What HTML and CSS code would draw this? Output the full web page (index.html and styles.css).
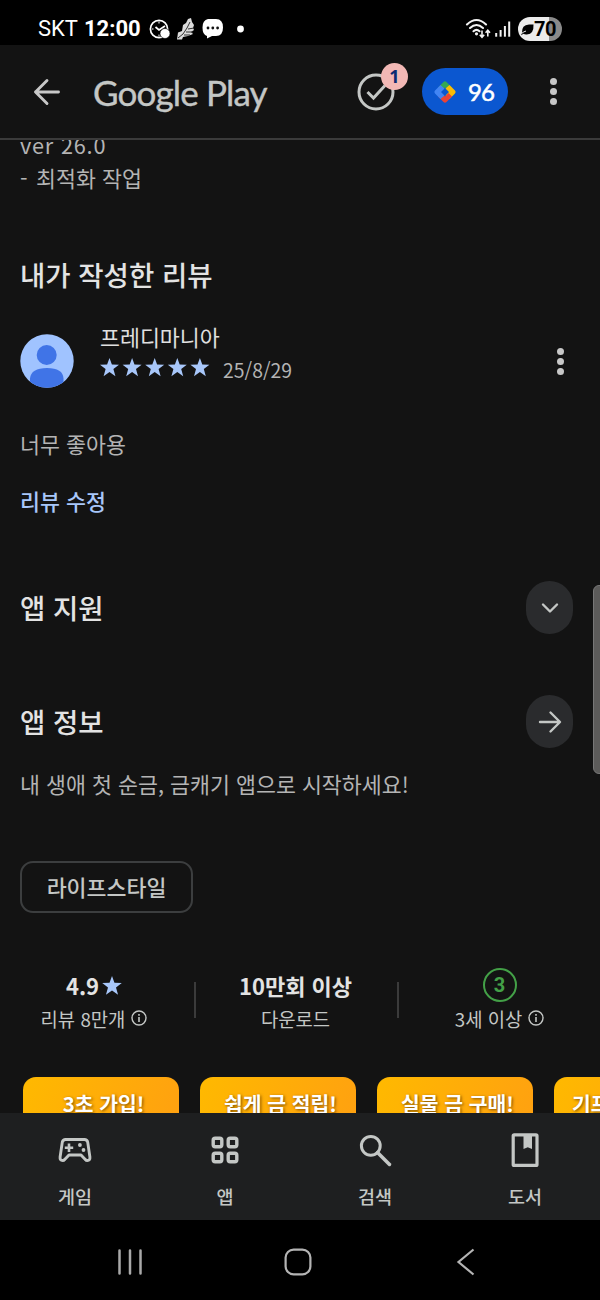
FILE: index.html
```html
<!DOCTYPE html>
<html lang="ko">
<head>
<meta charset="utf-8">
<title>Google Play</title>
<link rel="stylesheet" href="styles.css">
</head>
<body>
<div class="phone">
  <div class="status">
    <div class="status-left">
      <span class="carrier">SKT</span>
      <span class="clock">12:00</span>
      <svg class="status-icons" width="100" height="24" viewBox="0 0 100 24">
        <g fill="none" stroke="#fff" stroke-width="1.700">
          <circle cx="12" cy="12" r="8.600"/>
          <path d="M8.500 10l3.500 3 6-4"/>
          <path d="M12 4.500v2M5 12h1.500M12 17.500v2" stroke-width="1"/>
        </g>
        <circle cx="18" cy="16.500" r="5" fill="#fff" stroke="#000" stroke-width=".6"/>
        <path d="M30 22.500L31 15.500 35 14 36 8 39 6 41 2 44 1 45 5 47 8 46 11 47 13 44 15 46 17 41 19 36 20 35 22.500z" fill="#dcdcdc"/>
        <path d="M31 21L36 17 40 11 43 5M41 12l6-1M39 15l7 0M37 18l6 0" stroke="#333" stroke-width="1" fill="none"/>
        <path d="M61 2h8q7 0 7 8.500t-7 8.500h-4l-5 2.500v-2.500q-4.500-1-4.500-8.500t5.500-8.500z" fill="#fff"/>
        <g fill="#111"><circle cx="61" cy="11" r="1.400"/><circle cx="65.800" cy="11" r="1.400"/><circle cx="70.600" cy="11" r="1.400"/></g>
        <circle cx="93.500" cy="12" r="3.400" fill="#fff"/>
      </svg>
    </div>
    <div class="status-right">
      <svg width="48" height="24" viewBox="0 0 48 24">
        <g fill="none" stroke="#f2f2f2" stroke-width="2.100" stroke-linecap="round">
          <path d="M2 7.500q9.500-9 19 0M5 11q6.500-6 13 0M8.500 14.200q3-2.700 6 0"/>
        </g>
        <circle cx="11.500" cy="16.800" r="1.600" fill="#f2f2f2"/>
        <path d="M17 13.500v7M14.800 17.800l2.200 2.500 2.200-2.500M22.800 19.500v-6.500M20.600 15.700l2.200-2.500 2.200 2.500" fill="none" stroke="#f2f2f2" stroke-width="1.600"/>
        <g fill="#f2f2f2"><rect x="30.200" y="16" width="2" height="3.700"/><rect x="34.600" y="13" width="2" height="6.700"/><rect x="38.900" y="9" width="2" height="10.700"/><rect x="43.200" y="4.500" width="2" height="15.200"/></g>
      </svg>
      <div class="battery">
        <svg width="13" height="13" viewBox="0 0 13 13"><path d="M0 12.200L1 9.800Q.5 2 8 1.500h4.500Q13 11 6 11.500 3.500 11.700 2.500 10.800z" fill="#000"/><path d="M.5 10.500Q3 8.500 5 8" stroke="#ebebeb" stroke-width="1" fill="none"/></svg>
        <span>70</span>
      </div>
    </div>
  </div>

  <header class="topbar">
    <svg class="back" width="28" height="28" viewBox="0 0 28 28" fill="none" stroke="#c8c8c8" stroke-width="2.900" stroke-linecap="round" stroke-linejoin="round"><path d="M25.500 14H2.500M14 2.500L2.500 14 14 25.500"/></svg>
    <span class="brand">Google Play</span>
    <div class="tasks">
      <svg width="38" height="38" viewBox="0 0 38 38" fill="none" stroke="#c4c7c5" stroke-width="3"><circle cx="19" cy="19" r="17"/><path d="M10.500 19l6 6L28 12.500"/></svg>
      <span class="badge">1</span>
    </div>
    <div class="points">
      <svg width="24" height="24" viewBox="0 0 24 24">
        <path d="M5 7.500L10.500 2Q12 .6 13.500 2L19 7.500 15.500 11 12 7.500 8.500 11z" fill="#34a853"/>
        <path d="M16.500 5L22 10.500Q23.400 12 22 13.500L16.500 19 12.500 15.500 16 12 12.500 8.500z" fill="#fbbc04"/>
        <path d="M19 16.500L13.500 22Q12 23.400 10.500 22L5 16.500 8.500 13 12 16.500 15.500 13z" fill="#ea4335"/>
        <path d="M7.500 19L2 13.500Q.6 12 2 10.500L7.500 5 11.500 8.500 8 12 11.500 15.500z" fill="#4285f4"/>
      </svg>
      <span>96</span>
    </div>
    <div class="dots"><i></i><i></i><i></i></div>
  </header>

  <main class="content">
    <p class="notes"><span class="version">ver 26.0</span><br><span class="dash">-</span> 최적화 작업</p>
    <h2 class="heading my-review">내가 작성한 리뷰</h2>
    <div class="reviewer">
      <svg class="avatar" width="54" height="54" viewBox="0 0 54 54"><defs><clipPath id="disc"><circle cx="27" cy="27" r="26.700"/></clipPath></defs><g clip-path="url(#disc)"><rect width="54" height="54" fill="#a0c3ff"/><g fill="#4074e7"><circle cx="26.700" cy="21" r="10"/><path d="M10 54v-9.500Q11 34 27 34t16.500 10.500V54z"/></g></g></svg>
      <div class="who">
        <span class="name">프레디마니아</span>
        <div class="rating">
          <svg width="110" height="20" viewBox="0 0 110 20" fill="#a8c7fa"><defs><path id="star" d="M9.500 0l2.400 6.600 7.100.2-5.600 4.300 2 7.100-5.900-4.100-5.900 4.100 2-7.100L0 6.800l7.100-.2z"/></defs><use href="#star"/><use href="#star" x="22.600"/><use href="#star" x="45.200"/><use href="#star" x="67.800"/><use href="#star" x="90.400"/></svg>
          <span class="date">25/8/29</span>
        </div>
      </div>
      <div class="dots"><i></i><i></i><i></i></div>
    </div>
    <p class="body review-text">너무 좋아용</p>
    <a class="edit">리뷰 수정</a>
    <section class="row support">
      <h2 class="heading">앱 지원</h2>
      <span class="round"><svg width="24" height="24" viewBox="0 0 24 24"><path d="M5 8.500l7 7 7-7"/></svg></span>
    </section>
    <section class="row info">
      <h2 class="heading">앱 정보</h2>
      <span class="round"><svg width="24" height="24" viewBox="0 0 24 24"><path d="M2 12h19.500M12.500 2.500l9.500 9.500-9.500 9.500"/></svg></span>
    </section>
    <p class="body tagline">내 생애 첫 순금, 금캐기 앱으로 시작하세요!</p>
    <span class="chip">라이프스타일</span>
    <div class="stats">
      <div class="stat rating-stat">
        <strong>4.9<svg width="20" height="19" viewBox="0 0 19 18.500" fill="#a8c7fa"><use href="#star"/></svg></strong>
        <span>리뷰 8만개 <svg width="16" height="16" viewBox="0 0 16 16"><use href="#info"/></svg></span>
      </div>
      <div class="stat">
        <strong>10만회 이상</strong>
        <span>다운로드</span>
      </div>
      <div class="stat age-stat">
        <strong><b class="age">3</b></strong>
        <span>3세 이상 <svg width="16" height="16" viewBox="0 0 16 16"><g id="info"><circle cx="8" cy="8" r="7" fill="none" stroke="#c4c7c5" stroke-width="1.400"/><path d="M7.200 7h1.600v5H7.200zM7.200 4h1.600v1.700H7.200z" fill="#c4c7c5"/></g></svg></span>
      </div>
    </div>
    <div class="shots">
      <div class="shot">3초 가입!</div>
      <div class="shot">쉽게 금 적립!</div>
      <div class="shot">실물 금 구매!</div>
      <div class="shot partial">기프</div>
    </div>
    <div class="scrollbar"></div>
  </main>

  <nav class="tabs">
    <div class="tab">
      <svg width="36" height="36" viewBox="0 0 36 36" fill="none" stroke="#c4c7c5" stroke-width="2.900" stroke-linejoin="round"><path d="M8.500 7.500h19q2.500 0 3.200 2.600L32.900 25q.4 3.500-2.600 3.500-1.200 0-2-1L24 23H12l-4.300 4.500q-.8 1-2 1-3 0-2.600-3.500L5.300 10.100Q6 7.500 8.500 7.500z"/><path d="M12 11.500v8.400M7.800 15.700h8.400" stroke-width="2.600"/><g fill="#c4c7c5" stroke="none"><circle cx="22.900" cy="13" r="1.900"/><circle cx="26.500" cy="18" r="1.900"/></g></svg>
      <span>게임</span>
    </div>
    <div class="tab">
      <svg width="36" height="36" viewBox="0 0 36 36" fill="none" stroke="#c4c7c5" stroke-width="3.400"><rect x="6.200" y="6.200" width="8.600" height="8.600" rx="2"/><rect x="21.200" y="6.200" width="8.600" height="8.600" rx="2"/><rect x="6.200" y="21.200" width="8.600" height="8.600" rx="2"/><rect x="21.200" y="21.200" width="8.600" height="8.600" rx="2"/></svg>
      <span>앱</span>
    </div>
    <div class="tab">
      <svg width="36" height="36" viewBox="0 0 36 36" fill="none" stroke="#c4c7c5" stroke-width="3"><circle cx="13.800" cy="13.800" r="9.400"/><path d="M20.500 20.500L32.500 32.500" stroke-width="3.500" stroke-linecap="round"/></svg>
      <span>검색</span>
    </div>
    <div class="tab">
      <svg width="36" height="36" viewBox="0 0 36 36"><rect x="6.200" y="2.800" width="23.800" height="30.600" rx="1" fill="none" stroke="#c4c7c5" stroke-width="3.200"/><path d="M16.500 4h8.500v13l-4.250-1.800-4.250 1.800z" fill="#c4c7c5"/></svg>
      <span>도서</span>
    </div>
  </nav>

  <div class="sysnav">
    <svg width="26" height="28" viewBox="0 0 26 28" stroke="#a9a9a9" stroke-width="2.500" stroke-linecap="round"><path d="M2.500 2.500v23M13 2.500v23M23.500 2.500v23"/></svg>
    <svg class="home" width="28" height="28" viewBox="0 0 28 28" fill="none" stroke="#b4b4b4" stroke-width="2.200"><rect x="1.600" y="1.600" width="24.800" height="24.800" rx="8"/></svg>
    <svg width="20" height="28" viewBox="0 0 20 28" fill="none" stroke="#b4b4b4" stroke-width="2.200"><path d="M17.500 1.500L2.500 14l15 12.500"/></svg>
  </div>
</div>
</body>
</html>
```
FILE: styles.css
```css
* { box-sizing: border-box; }
body { margin: 0; background: #131313; font-family: "Noto Sans CJK KR", sans-serif; }
h2, p { margin: 0; }
svg { display: block; flex: none; }
.phone { width: 600px; height: 1300px; display: flex; flex-direction: column; overflow: hidden; background: #131313; color: #c4c7c5; white-space: nowrap; }

.status { height: 45px; flex: none; background: #000; color: #fff; display: flex; justify-content: space-between; padding: 12px 38px 0; }
.status-left, .status-right { display: flex; height: 34px; align-items: center; }
.carrier { font: 22px/34px Roboto, sans-serif; width: 46px; }
.clock { font: 700 22px/34px Roboto, sans-serif; width: 63px; }
.status-right { gap: 5px; }
.battery { width: 44px; height: 24px; border-radius: 12px; background: linear-gradient(90deg, #ebebeb 70%, #8a8a8a 70%); color: #000; display: flex; align-items: center; padding-left: 3px; font: 700 20px/24px Roboto, sans-serif; letter-spacing: -.4px; }

.topbar { height: 95px; flex: none; border-bottom: 2px solid #3b3b3b; display: flex; align-items: center; padding: 0 43px 0 33px; }
.brand { font: 35px/40px Lato, sans-serif; letter-spacing: -.85px; -webkit-text-stroke: .4px #c4c7c5; color: #c4c7c5; margin-left: 32px; width: 264px; }
.tasks { position: relative; }
.badge { position: absolute; left: 24px; top: -10px; width: 27px; height: 27px; border-radius: 50%; background: #f2b8b5; color: #0b2b72; text-align: center; font: 700 18px/26px "Open Sans", sans-serif; }
.points { margin-left: 27px; width: 86px; height: 47px; border-radius: 24px; background: #0b57d0; color: #fff; display: flex; align-items: center; padding-left: 11px; gap: 11px; font: 24px/46px Lato, sans-serif; letter-spacing: -.8px; -webkit-text-stroke: .5px #fff; }
.dots { display: flex; flex-direction: column; gap: 3px; margin-left: auto; }
.dots i { width: 7px; height: 7px; border-radius: 50%; background: #c7c7c7; }

.content { position: relative; height: 973px; flex: none; overflow: hidden; padding-left: 20px; display: flex; flex-direction: column; align-items: flex-start; }
.notes { margin-top: -12px; font-size: 21.7px; line-height: 33px; color: #b4b4b4; }
.version { letter-spacing: .8px; }
.dash { display: inline-block; width: 10px; }
.heading { font-size: 27.5px; line-height: 40px; font-weight: 500; color: #e3e3e3; }
.my-review { margin-top: 60px; }
.reviewer { align-self: stretch; display: flex; align-items: center; margin-top: 32px; padding-right: 36px; height: 70px; }
.who { margin-left: 26px; height: 78px; }
.name { display: block; font-size: 21.7px; line-height: 30px; color: #e0e0e0; }
.rating { display: flex; align-items: flex-start; gap: 13px; }
.rating svg { margin-top: 6px; }
.date { font-size: 19.4px; line-height: 36px; color: #b4b4b4; }
.body { font-size: 21.7px; line-height: 32px; color: #b4b4b4; }
.review-text { margin-top: 32px; }
.edit { font-size: 21.7px; line-height: 32px; font-weight: 500; color: #a8c7fa; margin-top: 25px; }
.row { display: flex; align-items: center; justify-content: space-between; align-self: stretch; padding-right: 27px; }
.row .heading { margin-top: -2px; }
.support { margin-top: 64px; }
.info { margin-top: 61px; }
.round { width: 47px; height: 53px; border-radius: 24px; background: #2a2b2d; display: flex; align-items: center; justify-content: center; }
.round svg { fill: none; stroke: #c4c7c5; stroke-width: 2.4; stroke-linecap: round; stroke-linejoin: round; }
.tagline { margin-top: 20px; }
.chip { margin-top: 61px; width: 173px; height: 53px; border: 2px solid #3c3e3f; border-radius: 13px; text-align: center; font-size: 21.7px; line-height: 48px; font-weight: 500; }
.stats { margin-top: 54px; margin-left: -20px; width: 600px; height: 67px; display: grid; grid-template-columns: 194px 203px 203px; }
.stat { display: flex; flex-direction: column; align-items: center; position: relative; }
.stat + .stat::before { content: ""; position: absolute; left: 0; top: 15px; width: 2px; height: 36px; background: #3b3b3b; }
.rating-stat { padding-right: 6px; }
.age-stat { padding-left: 2px; }
.stat strong { height: 36px; display: flex; align-items: center; font-size: 22px; font-weight: 700; color: #e3e3e3; gap: 3px; }
.stat > span { height: 30px; display: flex; align-items: center; gap: 6px; font-size: 18.8px; }
.age { width: 34px; height: 34px; border: 2px solid #43a047; border-radius: 50%; color: #43a047; text-align: center; font: 700 20px/30px Roboto, sans-serif; }
.shots { margin-top: 44px; margin-left: 3px; display: flex; gap: 21px; }
.shot { width: 156px; height: 277px; flex: none; border-radius: 13px; background: linear-gradient(110deg, #ffb900, #ff9518); color: #fff; text-align: center; padding-left: 5px; font-size: 20.4px; line-height: 52px; font-weight: 700; text-shadow: 1px 1px 3px #7a4a00; overflow: hidden; }
.partial { text-align: left; padding-left: 18px; }
.scrollbar { position: absolute; right: -7px; top: 445px; width: 14px; height: 189px; border: 1px solid #777; border-radius: 6px; background: #5c5b5a; }

.tabs { height: 107px; flex: none; background: #1e1f20; display: grid; grid-template-columns: repeat(4, 150px); }
.tab { display: flex; flex-direction: column; align-items: center; padding-top: 19px; gap: 14px; font-size: 18.5px; line-height: 28px; font-weight: 500; }
.sysnav { height: 80px; flex: none; background: #000; display: flex; align-items: center; padding: 3px 124px 0 117px; justify-content: space-between; }
.home { margin-right: 4px; }
```
